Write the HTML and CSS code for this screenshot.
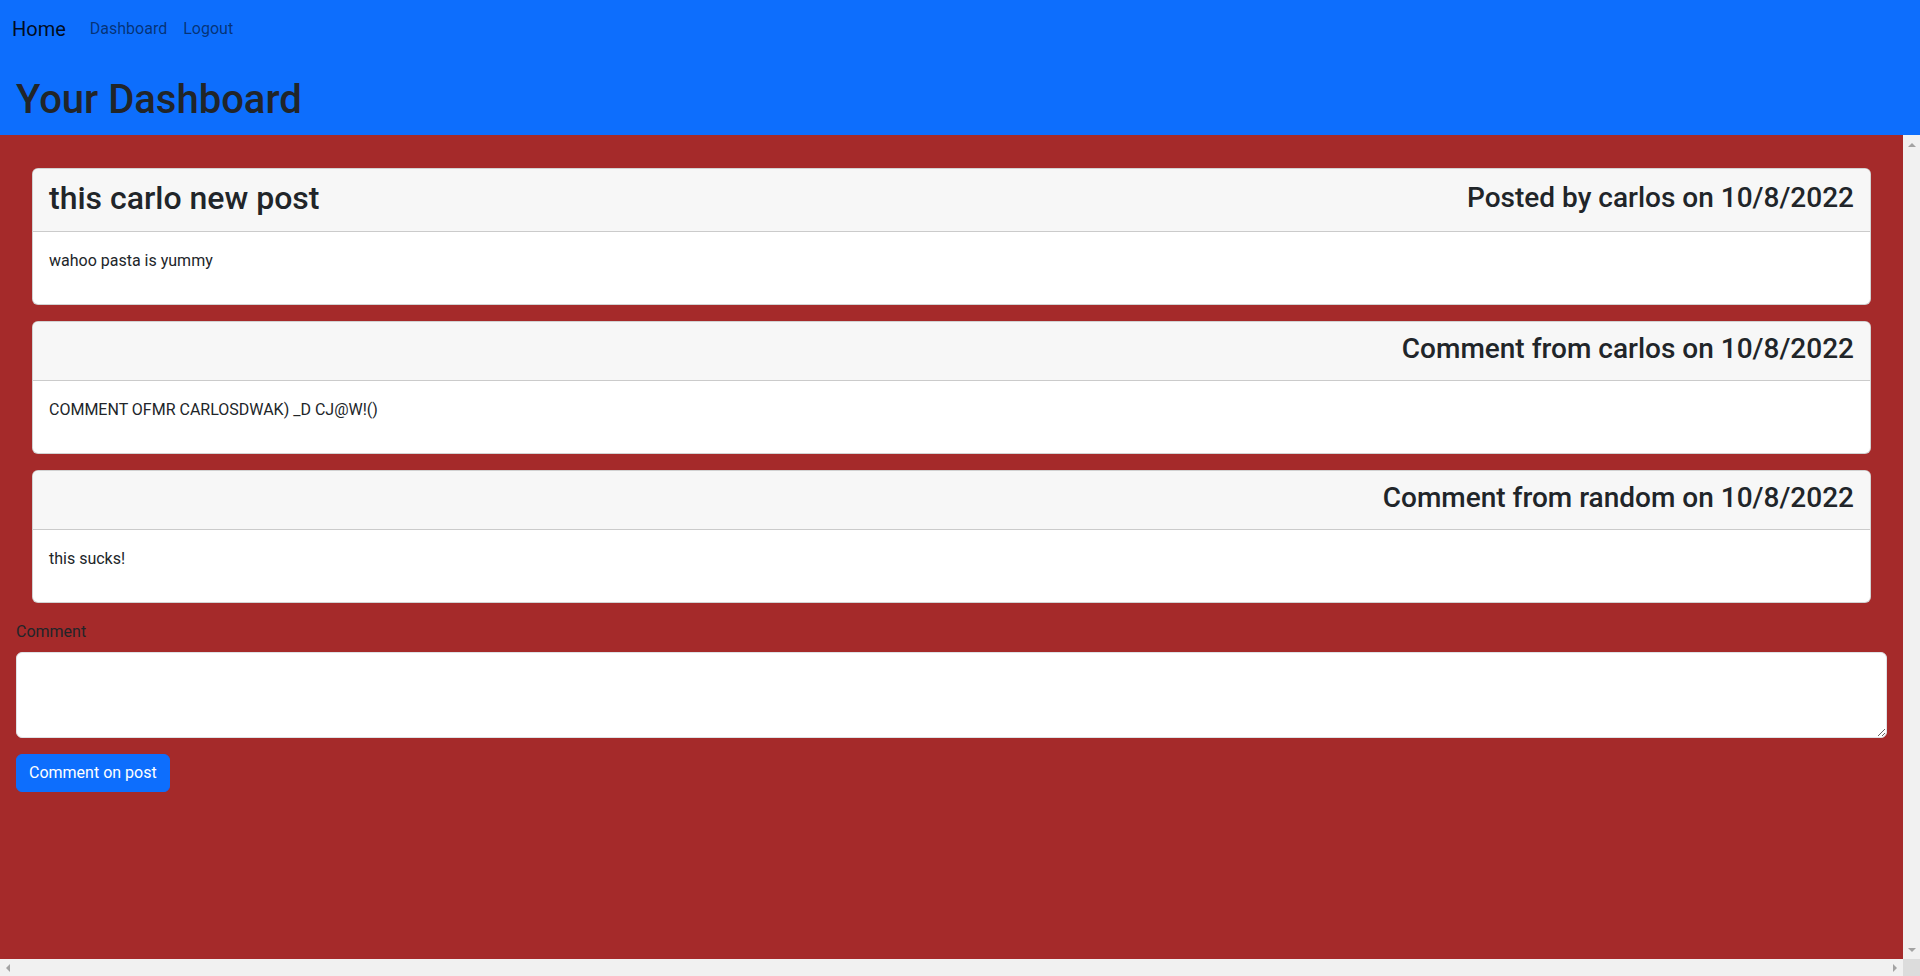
FILE: index.html
```html
<!DOCTYPE html>
<html lang="en">
<head>
<meta charset="utf-8">
<title>Your Dashboard</title>
<link rel="stylesheet" href="styles.css">
</head>
<body>
<header class="topbar">
  <nav class="navbar">
    <a class="brand" href="#">Home</a>
    <a class="nav-link" href="#">Dashboard</a>
    <a class="nav-link" href="#">Logout</a>
  </nav>
  <div class="hero">
    <h1 class="hero-title">Your Dashboard</h1>
  </div>
</header>
<div class="viewport">
  <main class="content">
    <article class="card">
      <div class="card-header">
        <h2 class="card-title">this carlo new post</h2>
        <h3 class="card-meta">Posted by carlos on 10/8/2022</h3>
      </div>
      <div class="card-body">
        <p>wahoo pasta is yummy</p>
      </div>
    </article>
    <article class="card">
      <div class="card-header">
        <h2 class="card-title"></h2>
        <h3 class="card-meta">Comment from carlos on 10/8/2022</h3>
      </div>
      <div class="card-body">
        <p>COMMENT OFMR CARLOSDWAK) _D CJ@W!()</p>
      </div>
    </article>
    <article class="card">
      <div class="card-header">
        <h2 class="card-title"></h2>
        <h3 class="card-meta">Comment from random on 10/8/2022</h3>
      </div>
      <div class="card-body">
        <p>this sucks!</p>
      </div>
    </article>
    <form class="comment-form">
      <div class="field">
        <label class="form-label" for="comment">Comment</label>
        <textarea class="form-control" id="comment" rows="3"></textarea>
      </div>
      <button class="btn" type="button">Comment on post</button>
    </form>
  </main>
  <div class="vscroll">
    <span class="arrow arrow-up"></span>
    <span class="arrow arrow-down"></span>
  </div>
  <div class="hscroll">
    <span class="arrow arrow-left"></span>
    <span class="arrow arrow-right"></span>
  </div>
  <div class="corner"></div>
</div>
</body>
</html>
```
FILE: styles.css
```css
* {
  box-sizing: border-box;
}

html, body {
  margin: 0;
  height: 976px;
  overflow: hidden;
}

body {
  display: flex;
  flex-direction: column;
  font-family: Roboto, "Liberation Sans", sans-serif;
  font-size: 16px;
  line-height: 1.5;
  color: #212529;
  background: #a52a2a;
}

/* ---------- header ---------- */
.topbar {
  flex: 0 0 135px;
  background: #0d6efd;
}

.navbar {
  display: flex;
  align-items: center;
  height: 56px;
  padding: 8px 12px;
}

.brand {
  font-size: 20px;
  line-height: 30px;
  padding: 6px 0 4px;
  margin-right: 16px;
  color: rgba(0, 0, 0, 0.9);
  text-decoration: none;
}

.nav-link {
  font-size: 16px;
  line-height: 24px;
  padding: 9px 8px 7px;
  color: rgba(0, 0, 0, 0.55);
  text-decoration: none;
}

.hero {
  padding: 20px 16px 0;
}

.hero-title {
  margin: 0;
  font-size: 40px;
  font-weight: 500;
  line-height: 48px;
}

/* ---------- scrolling viewport ---------- */
.viewport {
  flex: 1 1 auto;
  display: grid;
  grid-template-columns: 1fr 17px;
  grid-template-rows: 1fr 17px;
  min-height: 0;
}

.content {
  padding: 17px 16px 16px;
  min-height: 0;
  overflow: hidden;
}

.vscroll,
.hscroll {
  display: flex;
  justify-content: space-between;
  align-items: center;
  background: #f1f1f1;
}

.vscroll {
  flex-direction: column;
  padding: 8px 0 7px;
}

.hscroll {
  padding: 0 6px;
}

.corner {
  background: #dcdcdc;
}

.arrow {
  width: 0;
  height: 0;
  border-style: solid;
  border-color: transparent;
}

.arrow-up {
  border-width: 0 4px 4px;
  border-bottom-color: #a3a3a3;
}

.arrow-down {
  border-width: 4px 4px 0;
  border-top-color: #a3a3a3;
}

.arrow-left {
  border-width: 4px 4px 4px 0;
  border-right-color: #a3a3a3;
}

.arrow-right {
  border-width: 4px 0 4px 4px;
  border-left-color: #a3a3a3;
}

/* ---------- cards ---------- */
.card {
  margin: 16px;
  background: #fff;
  border: 1px solid rgba(0, 0, 0, 0.175);
  border-radius: 6px;
  overflow: hidden;
}

.card-header {
  display: flex;
  justify-content: space-between;
  align-items: center;
  padding: 8px 16px;
  background: #f7f7f7;
  border-bottom: 1px solid rgba(0, 0, 0, 0.175);
}

.card-title {
  margin: 2px 0 6px;
  font-size: 32px;
  font-weight: 500;
  line-height: 38.4px;
}

.card-title:empty {
  margin: 0;
}

.card-meta {
  margin: 2px 0 6px;
  font-size: 28px;
  font-weight: 500;
  line-height: 33.6px;
}

.card-body {
  padding: 16px;
}

.card-body p {
  margin: 0 0 16px;
  padding-top: 1px;
  height: 24px;
}

/* ---------- form ---------- */
.field {
  margin-bottom: 16px;
}

.form-label {
  display: block;
  margin-bottom: 8px;
  padding-top: 1px;
  line-height: 24px;
}

.form-control {
  display: block;
  width: 100%;
  height: 86px;
  padding: 6px 12px;
  font: inherit;
  color: #212529;
  background: #fff;
  border: 1px solid #dee2e6;
  border-radius: 6px;
  resize: vertical;
}

.btn {
  display: inline-block;
  padding: 6px 12px;
  font: inherit;
  line-height: 24px;
  color: #fff;
  background: #0d6efd;
  border: 1px solid #0d6efd;
  border-radius: 6px;
}
```
